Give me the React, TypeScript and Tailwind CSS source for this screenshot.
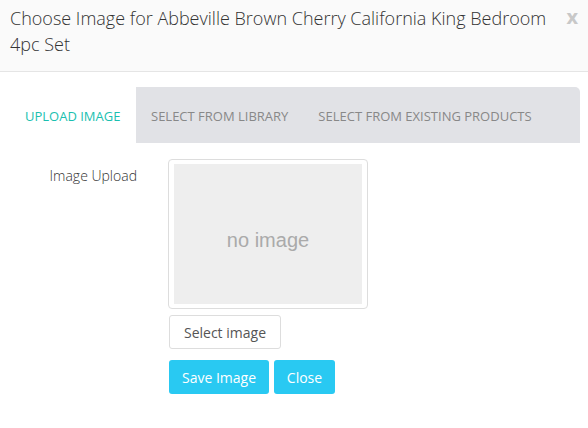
import React from 'react';

const tabs = ['SELECT FROM LIBRARY', 'SELECT FROM EXISTING PRODUCTS'];

export default function App() {
  return (
    <div className="w-[588px] h-[428px] bg-white font-['Open_Sans',sans-serif] overflow-hidden">
      {/* Header */}
      <div className="relative bg-[#fafafa] border-b border-[#e5e5e5] h-[72px] px-[10px] pt-[5px]">
        <h1 className="w-[545px] text-[18px] leading-[26px] font-light text-[#333]">
          Choose Image for Abbeville Brown Cherry California King Bedroom 4pc Set
        </h1>
        <button className="absolute right-[10px] top-[7px] text-[20px] leading-[20px] font-bold text-[#c8c8c8]">
          x
        </button>
      </div>

      {/* Tabs */}
      <div className="mt-[15px] ml-[15px] mr-[8px] flex h-[56px]">
        <div className="w-[121px] flex items-center pl-[10px] pt-[3px] bg-white text-[13px] text-[#1bbfb0]">
          UPLOAD IMAGE
        </div>
        <div className="flex-1 flex bg-[#e1e2e6] rounded-tr-[5px]">
          {tabs.map((t) => (
            <div key={t} className="px-[15px] pt-[3px] flex items-center text-[13px] text-[#888]">
              {t}
            </div>
          ))}
        </div>
      </div>

      {/* Form */}
      <div className="flex mt-[16px]">
        <label className="w-[137px] text-right pt-[7px] text-[14px] leading-[20px] font-light text-[#333]">
          Image Upload
        </label>
        <div className="ml-[31px] flex flex-col items-start">
          <div className="w-[200px] h-[150px] border border-[#ddd] rounded-[4px] px-[5px] py-[4px]">
            <div className="w-full h-full bg-[#eeeeee] flex items-center justify-center pt-[12px] font-['Liberation_Sans',sans-serif] text-[20px] text-[#aaa]">
              no image
            </div>
          </div>
          <button className="mt-[6px] ml-[1px] w-[112px] h-[34px] border border-[#ddd] rounded-[3px] bg-white text-[14px] text-[#555]">
            Select image
          </button>
          <div className="mt-[11px] ml-[1px] flex gap-[5px]">
            <button className="w-[100px] h-[34px] rounded-[3px] bg-[#29c9f2] text-white text-[14px]">
              Save Image
            </button>
            <button className="w-[61px] h-[34px] rounded-[3px] bg-[#29c9f2] text-white text-[14px]">
              Close
            </button>
          </div>
        </div>
      </div>
    </div>
  );
}
